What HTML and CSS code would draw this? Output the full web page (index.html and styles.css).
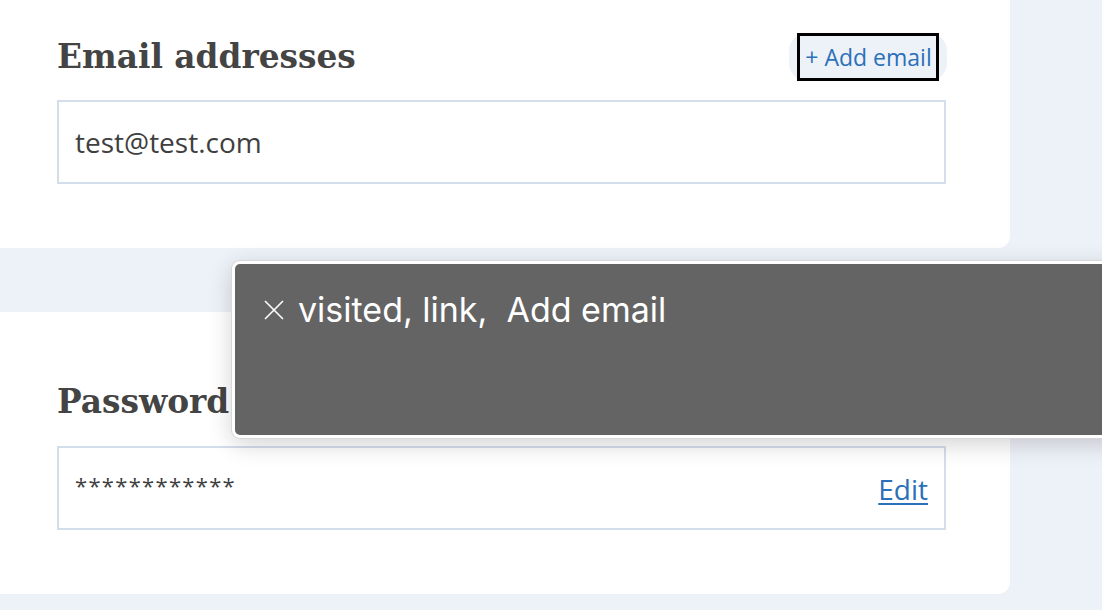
FILE: index.html
```html
<!DOCTYPE html>
<html lang="en">
<head>
<meta charset="utf-8">
<title>Account settings</title>
<link rel="stylesheet" href="styles.css">
</head>
<body>
<main class="page">
  <section class="card card-top">
    <div class="card-head">
      <h2 class="heading">Email addresses</h2>
      <span class="pill"><a class="add-link" href="#">+ Add email</a></span>
    </div>
    <div class="field">
      <span class="field-value">test@test.com</span>
    </div>
  </section>
  <section class="card card-bottom">
    <div class="card-head">
      <h2 class="heading">Password</h2>
    </div>
    <div class="field field-pw">
      <span class="field-value stars">************</span>
      <a class="edit-link" href="#">Edit</a>
    </div>
  </section>
</main>
<div class="voiceover">
  <span class="vo-close">
    <svg width="22" height="22" viewBox="0 0 22 22" aria-hidden="true"><path d="M2 2L20 20M20 2L2 20" stroke="#fff" stroke-width="1.6" fill="none"/></svg>
  </span>
  <span class="vo-text">visited, link,&nbsp; Add email</span>
</div>
</body>
</html>
```
FILE: styles.css
```css
html, body {
  margin: 0;
  padding: 0;
}
body {
  background: #edf1f8;
  width: 1102px;
  height: 610px;
  overflow: hidden;
  position: relative;
  font-family: "Open Sans", "Liberation Sans", sans-serif;
  color: #3f3f3f;
}
.page {
  display: flex;
  flex-direction: column;
  gap: 64px;
  width: 1010px;
}
.card {
  background: #fff;
  padding: 0 64px 0 57px;
  box-sizing: border-box;
}
.card-top {
  border-radius: 0 0 12px 0;
  padding-top: 33px;
  height: 248px;
}
.card-bottom {
  border-radius: 0 12px 12px 0;
  padding-top: 67px;
  height: 282px;
}
.card-head {
  display: flex;
  align-items: center;
  justify-content: space-between;
  height: 48px;
  margin-bottom: 19px;
}
.heading {
  margin: 0;
  font-family: "DejaVu Serif", "Liberation Serif", serif;
  font-weight: bold;
  font-size: 32.8px;
  line-height: 40px;
  margin-top: -1px;
  color: #444;
}
.card-bottom .heading {
  margin-top: -3px;
}
.pill {
  display: flex;
  align-items: center;
  justify-content: center;
  background: #edf1f8;
  border-radius: 18px;
  width: 158px;
  height: 48px;
  margin-right: -1px;
}
.add-link {
  color: #2b70b9;
  text-decoration: none;
  font-size: 23px;
  outline: 3px solid #000;
  padding: 4px 4px 4px 5px;
  line-height: 34px;
  margin-top: 0;
}
.field {
  border: 2px solid #d3deeb;
  height: 84px;
  box-sizing: border-box;
  display: flex;
  align-items: center;
  padding: 0 16px;
}
.field-value {
  font-size: 28px;
  color: #3f3f3f;
}
.field-pw {
  justify-content: space-between;
  align-items: flex-start;
}
.stars {
  margin-top: 22px;
  font-size: 22px;
  letter-spacing: 1.3px;
}
.edit-link {
  color: #2b70b9;
  font-size: 28px;
  margin-top: 22px;
  text-decoration: underline;
  text-decoration-thickness: 2px;
  text-underline-offset: 3px;
}
.voiceover {
  position: absolute;
  left: 232px;
  top: 261px;
  width: 900px;
  height: 177px;
  box-sizing: border-box;
  background: #646464;
  border: 3px solid #fff;
  border-radius: 8px;
  box-shadow: 0 0 0 1px #d8d8d8, 0 6px 24px rgba(0,0,0,0.18);
  display: flex;
  align-items: flex-start;
  gap: 13px;
  padding: 26px 28px;
  color: #fff;
  font-family: "Inter", "Liberation Sans", sans-serif;
  font-size: 34px;
}
.vo-close {
  display: flex;
  margin-top: 9px;
}
.vo-text {
  line-height: 40px;
}
```
